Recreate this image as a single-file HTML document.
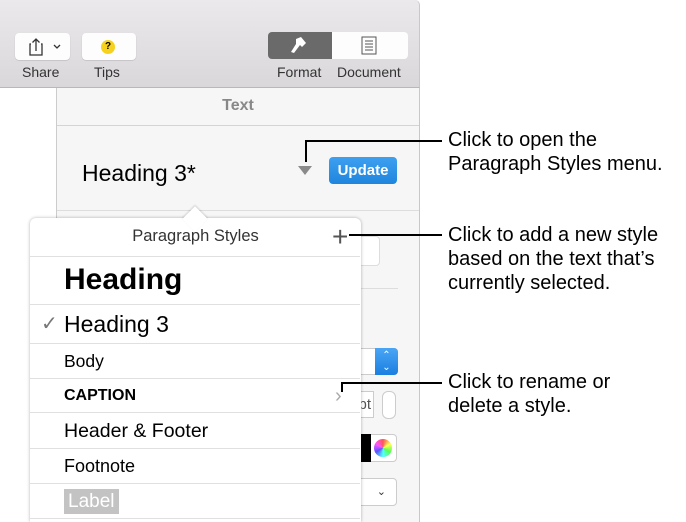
<!DOCTYPE html>
<html><head><style>
*{margin:0;padding:0;box-sizing:border-box}
html,body{width:686px;height:522px;overflow:hidden}
body{position:relative;background:#fff;font-family:"Liberation Sans",sans-serif}
.a{position:absolute}
.tb{left:0;top:0;width:420px;height:88px;background:linear-gradient(#ebe9eb,#d9d7d9);border-bottom:1px solid #b9b8b9;border-right:1px solid #c8c8c8;border-top-right-radius:5px}
.btn{background:#fdfdfd;border-radius:4px;height:27px;top:33px;box-shadow:0 0.5px 1px rgba(0,0,0,.2)}
.lbl{font-size:14px;color:#333;top:64px}
.side{left:56px;top:88px;width:364px;height:434px;background:#f6f6f6;border-left:1px solid #ccc;border-right:1px solid #c8c8c8}
.row{position:absolute;left:0;width:330px;border-top:1px solid #e0e0e0;padding-left:34px;color:#000}
.ann{font-size:20px;line-height:24px;color:#000;left:448px}
.line{background:#000}
</style></head><body>
<div class="a tb"></div>
<div class="a btn" style="left:15px;width:55px"></div>
<svg class="a" style="left:27px;top:36px" width="40" height="22"><path d="M4 8h-1v11h12v-11h-1M9 15V3M5.5 6.5L9 3l3.5 3.5" fill="none" stroke="#333" stroke-width="1.3"/><path d="M27 9l3 3 3-3" fill="none" stroke="#333" stroke-width="1.3"/></svg>
<div class="a lbl" style="left:22px">Share</div>
<div class="a btn" style="left:82px;width:54px"></div>
<div class="a" style="left:101px;top:40px;width:14px;height:14px;border-radius:50%;background:#f6d21e;font-size:10px;font-weight:bold;text-align:center;line-height:14px">?</div>
<div class="a lbl" style="left:94px">Tips</div>
<div class="a" style="left:268px;top:32px;width:64px;height:27px;background:#6b6a6b;border-radius:4px 0 0 4px"></div>
<svg class="a" style="left:287px;top:36px" width="22" height="20"><path d="M9 3l5-2 5 6-4 4-2-2-6 8-3-1 5-8z" fill="#fff"/></svg>
<div class="a" style="left:332px;top:32px;width:76px;height:27px;background:#fdfdfd;border-radius:0 4px 4px 0"></div>
<svg class="a" style="left:361px;top:36px" width="16" height="20"><rect x="1" y="1" width="14" height="17" fill="none" stroke="#555"/><path d="M4 5h8M4 8h8M4 11h8M4 14h8" stroke="#555"/></svg>
<div class="a lbl" style="left:277px">Format</div>
<div class="a lbl" style="left:337px">Document</div>
<div class="a side"></div>
<div class="a" style="left:57px;top:88px;width:362px;height:38px;border-bottom:1px solid #d4d4d4;text-align:center;font-size:16px;font-weight:bold;color:#888;line-height:36px">Text</div>
<div class="a" style="left:57px;top:210px;width:362px;border-top:1px solid #ddd"></div>
<div class="a" style="left:82px;top:160px;font-size:23px;color:#000">Heading 3*</div>
<svg class="a" style="left:298px;top:166px" width="14" height="10"><path d="M0 0h14l-7 9z" fill="#8a8a8a"/></svg>
<div class="a" style="left:329px;top:157px;width:68px;height:27px;background:linear-gradient(#3da0f0,#1f85dd);border-radius:4px;color:#fff;font-weight:bold;font-size:15px;text-align:center;line-height:27px">Update</div>
<div class="a" style="left:350px;top:236px;width:30px;height:30px;background:#fff;border:1px solid #ddd;border-radius:4px"></div>
<div class="a" style="left:360px;top:288px;width:38px;border-top:1px solid #ddd"></div>
<div class="a" style="left:350px;top:348px;width:48px;height:27px;background:#fff;border:1px solid #ccc;border-radius:4px"></div>
<div class="a" style="left:375px;top:348px;width:23px;height:27px;background:linear-gradient(#4aa5f5,#1a7fe0);border-radius:0 4px 4px 0;color:#fff;font-size:10px;text-align:center;line-height:12px;padding-top:2px">⌃<br>⌄</div>
<div class="a" style="left:350px;top:391px;width:24px;height:27px;background:#fff;border:1px solid #ccc;font-size:15px;color:#555;line-height:25px;text-align:right;padding-right:2px">pt</div>
<div class="a" style="left:382px;top:391px;width:14px;height:28px;background:#fff;border:1px solid #ccc;border-radius:6px"></div>
<div class="a" style="left:350px;top:434px;width:47px;height:28px;background:#fff;border:1px solid #ccc;border-radius:4px"></div>
<div class="a" style="left:350px;top:434px;width:21px;height:28px;background:#000"></div>
<div class="a" style="left:374px;top:439px;width:18px;height:18px;border-radius:50%;background:conic-gradient(#f55,#ff5,#5f5,#5ff,#55f,#f5f,#f55)"></div>
<div class="a" style="left:350px;top:478px;width:47px;height:28px;background:#fff;border:1px solid #ccc;border-radius:4px;font-size:11px;text-align:right;padding-right:10px;line-height:26px;color:#333">⌄</div>
<!-- popover -->
<div class="a" style="left:30px;top:218px;width:331px;height:304px;background:#fff;border-radius:6px 6px 0 0;box-shadow:0 0 3px rgba(0,0,0,.3)"></div>
<div class="a" style="left:186px;top:210px;width:18px;height:18px;background:#fff;transform:rotate(45deg);box-shadow:-1px -1px 2px rgba(0,0,0,.15)"></div>
<div class="a" style="left:30px;top:218px;width:331px;height:304px;overflow:hidden">
<div style="position:absolute;left:0;top:0;width:331px;height:38px;text-align:center;font-size:16.5px;color:#333;line-height:37px">Paragraph Styles</div>
<div style="position:absolute;left:302px;top:5px;font-size:28px;color:#555;line-height:28px">+</div>
<div class="row" style="top:38px;height:48px;font-size:30px;font-weight:bold;line-height:46px">Heading</div>
<div class="row" style="top:86px;height:39px;font-size:23px;line-height:38px"><span style="position:absolute;left:11px;color:#777;font-size:20px">✓</span>Heading 3</div>
<div class="row" style="top:125px;height:35px;font-size:17.5px;line-height:34px">Body</div>
<div class="row" style="top:160px;height:34px;font-size:16px;font-weight:bold;line-height:34px">CAPTION<span style="position:absolute;left:305px;color:#aaa;font-size:20px;font-weight:normal">›</span></div>
<div class="row" style="top:194px;height:36px;font-size:19.5px;line-height:36px">Header &amp; Footer</div>
<div class="row" style="top:230px;height:35px;font-size:18px;line-height:35px">Footnote</div>
<div class="row" style="top:265px;height:35px;line-height:35px"><span style="background:#c3c3c3;color:#fff;font-size:19px;padding:2px 4px">Label</span></div>
<div class="row" style="top:300px;height:5px"></div>
</div>
<!-- annotations -->
<div class="a line" style="left:305px;top:140px;width:2px;height:22px"></div>
<div class="a line" style="left:305px;top:140px;width:137px;height:2px"></div>
<div class="a line" style="left:349px;top:234px;width:93px;height:2px"></div>
<div class="a line" style="left:342px;top:382px;width:100px;height:2px"></div>
<div class="a line" style="left:341px;top:382px;width:2px;height:10px"></div>
<div class="a ann" style="top:128px">Click to open the<br>Paragraph Styles menu.</div>
<div class="a ann" style="top:223px">Click to add a new style<br>based on the text that’s<br>currently selected.</div>
<div class="a ann" style="top:370px">Click to rename or<br>delete a style.</div>
</body></html>
